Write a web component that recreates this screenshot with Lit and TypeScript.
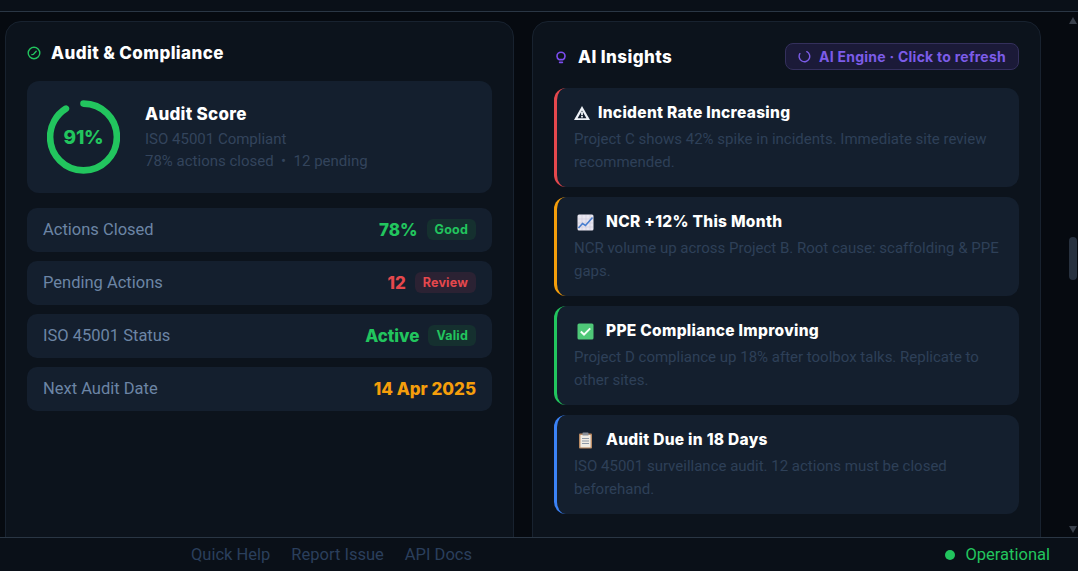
import { css, html, LitElement, svg } from "lit";
import { customElement } from "lit/decorators.js";

const rows = [
  { label: "Actions Closed", value: "78%", tone: "green", badge: "Good" },
  { label: "Pending Actions", value: "12", tone: "red", badge: "Review" },
  { label: "ISO 45001 Status", value: "Active", tone: "green", badge: "Valid" },
  { label: "Next Audit Date", value: "14 Apr 2025", tone: "amber", badge: "" },
];

const warnIcon = svg`<path d="M8 1 16 15H0Z" fill="#eef2f7"/><path d="M8 5.6 12.4 13.2H3.6Z" fill="#141f2e"/><path d="M7.1 6.8h1.8v3.4H7.1zM7.1 10.9h1.8v1.5H7.1z" fill="#eef2f7"/>`;
const chartIcon = svg`<rect x="0.5" y="0.5" width="16" height="16" rx="1.5" fill="#e8e6f0"/><path d="M1 5h15M1 9h15M1 13h15M5 1v15M9 1v15M13 1v15" stroke="#cfc9dc" stroke-width=".6"/><path d="M1.5 14 5.5 9.5 8.5 11.5 15.5 3.5" fill="none" stroke="#4a7fd0" stroke-width="1.6"/>`;
const checkIcon = svg`<rect x="0.5" y="0.5" width="16" height="16" rx="1.5" fill="#4fc878"/><path d="M3.8 8.6 7 11.6 13.2 5.4" fill="none" stroke="#f4fff7" stroke-width="2"/>`;
const clipIcon = svg`<rect x="2" y="1.5" width="13" height="15" rx="1" fill="#b98a63"/><rect x="3.4" y="3" width="10.2" height="12.4" fill="#f0ece4"/><rect x="5.5" y="0.5" width="6" height="3" rx=".6" fill="#8a8f98"/><path d="M5 6.5h7M5 9h7M5 11.5h7" stroke="#8f9aa8" stroke-width="1"/>`;

const insights = [
  { title: "Incident Rate Increasing", text: "Project C shows 42% spike in incidents. Immediate site review recommended.", tone: "red", icon: warnIcon },
  { title: "NCR +12% This Month", text: "NCR volume up across Project B. Root cause: scaffolding & PPE gaps.", tone: "amber", icon: chartIcon },
  { title: "PPE Compliance Improving", text: "Project D compliance up 18% after toolbox talks. Replicate to other sites.", tone: "green", icon: checkIcon },
  { title: "Audit Due in 18 Days", text: "ISO 45001 surveillance audit. 12 actions must be closed beforehand.", tone: "blue", icon: clipIcon },
];

@customElement("app-root")
export class AppRoot extends LitElement {
  static styles = css`
    :host {
      display: flex;
      flex-direction: column;
      height: 100vh;
      overflow: hidden;
      background: #060a10;
      font-family: Roboto, "Liberation Sans", sans-serif;
      color: #fff;
    }

    .topbar {
      flex: none;
      height: 11px;
      background: #0a1018;
      border-bottom: 1px solid #2a3644;
    }

    .middle {
      flex: 1;
      min-height: 0;
      display: flex;
      justify-content: space-between;
    }

    .panels {
      display: flex;
      gap: 18px;
      padding: 9px 0 0 5px;
      overflow: hidden;
    }

    .panel {
      box-sizing: border-box;
      flex: none;
      width: 509px;
      height: 560px;
      background: #0c131c;
      border: 1px solid #18222f;
      border-radius: 16px;
      padding: 21px;
    }

    .head {
      display: flex;
      align-items: center;
      font: 800 17px/20px Inter, sans-serif;
      letter-spacing: 0.4px;
    }

    .head svg {
      flex: none;
    }

    .score {
      display: flex;
      align-items: center;
      gap: 25px;
      height: 112px;
      margin-top: 18px;
      padding: 0 20px;
      background: #141f2e;
      border-radius: 12px;
    }

    .ring {
      position: relative;
      flex: none;
      width: 73px;
      height: 74px;
    }

    .ring span {
      position: absolute;
      inset: 0;
      display: flex;
      align-items: center;
      justify-content: center;
      font: 800 19px Inter, sans-serif;
      letter-spacing: -0.2px;
      color: #22c55e;
    }

    .score h3 {
      margin: 0 0 3px;
      font: 800 17px/22px Inter, sans-serif;
      letter-spacing: 0.3px;
    }

    .score p {
      margin: 0;
      font-size: 15px;
      line-height: 22px;
      color: #33445c;
    }

    .rows {
      display: flex;
      flex-direction: column;
      gap: 9.4px;
      margin-top: 15px;
    }

    .row {
      display: flex;
      align-items: center;
      justify-content: space-between;
      height: 43.6px;
      padding: 0 16px;
      background: #141f2e;
      border-radius: 10px;
      font-size: 16.5px;
      color: #6c85a5;
    }

    .row div {
      display: flex;
      align-items: center;
      gap: 9px;
    }

    .val {
      font: 800 17px Inter, sans-serif;
    }

    .green { color: #22c55e; }
    .red { color: #e5484d; }
    .amber { color: #f59e0b; }

    .badge {
      padding: 3px 8px;
      border-radius: 6px;
      font: 700 12.5px/15px Inter, sans-serif;
      letter-spacing: 0.2px;
    }

    .badge.green { background: #15302f; }
    .badge.red { background: #2b2233; }

    .ai-head {
      justify-content: space-between;
      height: 27px;
    }

    .ai-title {
      display: flex;
      align-items: center;
    }

    .refresh {
      display: flex;
      align-items: center;
      gap: 8px;
      box-sizing: border-box;
      width: 234px;
      height: 27px;
      justify-content: center;
      background: #1b1a38;
      border: 1px solid #34305c;
      border-radius: 8px;
      color: #7c5ce8;
      font: 700 14px Inter, sans-serif;
      letter-spacing: 0.25px;
    }

    .insights {
      display: flex;
      flex-direction: column;
      gap: 10px;
      margin-top: 18px;
    }

    .insight {
      box-sizing: border-box;
      height: 99px;
      padding: 14px 16px 0 17px;
      background: #141f2e;
      border-left: 3px solid;
      border-radius: 12px;
    }

    .insight.red { border-color: #e5484d; }
    .insight.amber { border-color: #f59e0b; }
    .insight.green { border-color: #22c55e; }
    .insight.blue { border-color: #3b82f6; }

    .insight h4 {
      display: flex;
      align-items: center;
      gap: 7px;
      margin: 0;
      font: 800 15.5px/22px Inter, sans-serif;
      letter-spacing: 0.3px;
      color: #fff;
    }

    .insight h4 svg {
      margin-right: 1px;
    }

    .insight h4 svg.wide {
      margin: 0 5px 0 3px;
    }

    .insight p {
      margin: 4px 0 0;
      font-size: 15px;
      line-height: 23px;
      color: #2e4058;
    }

    .scrollbar {
      flex: none;
      box-sizing: border-box;
      width: 11px;
      padding-top: 5px;
      display: flex;
      flex-direction: column;
      align-items: center;
    }

    .arrow {
      width: 0;
      height: 0;
      border-left: 4px solid transparent;
      border-right: 4px solid transparent;
    }

    .arrow.up {
      border-bottom: 7px solid #3a414c;
    }

    .arrow.down {
      border-top: 7px solid #3a414c;
    }

    .thumb {
      width: 8px;
      height: 43px;
      margin: 213px 0 246px;
      border-radius: 4px;
      background: #27313f;
    }

    .footer {
      flex: none;
      box-sizing: border-box;
      height: 34px;
      display: flex;
      align-items: center;
      padding: 0 28px 0 191px;
      background: #0a1018;
      border-top: 1px solid #2a3644;
      font-size: 16.5px;
    }

    .links {
      display: flex;
      gap: 21px;
      color: #2a3f5c;
    }

    .status {
      display: flex;
      align-items: center;
      gap: 10px;
      margin-left: auto;
      color: #22c55e;
    }

    .dot {
      width: 10px;
      height: 10px;
      border-radius: 50%;
      background: #22c55e;
    }
  `;

  render() {
    return html`
      <div class="topbar"></div>
      <div class="middle">
        <div class="panels">
          <section class="panel">
            <div class="head">
              <svg width="14" height="14" viewBox="0 0 14 14" style="margin-right:10px" fill="none" stroke="#22c55e" stroke-width="1.4" stroke-linecap="round" stroke-linejoin="round">
                <circle cx="7" cy="7" r="5.8" />
                <path d="M4.9 8.6 6.4 8.4 9.2 5.2" />
              </svg>
              Audit &amp; Compliance
            </div>
            <div class="score">
              <div class="ring">
                <svg width="73" height="74" viewBox="0 0 73 74">
                  <circle cx="36.5" cy="37" r="33.4" fill="none" stroke="#22c55e" stroke-width="6.6" stroke-linecap="round" stroke-dasharray="191 210" transform="rotate(-90 36.5 37)" />
                </svg>
                <span>91%</span>
              </div>
              <div>
                <h3>Audit Score</h3>
                <p>ISO 45001 Compliant</p>
                <p>78% actions closed &nbsp;•&nbsp; 12 pending</p>
              </div>
            </div>
            <div class="rows">
              ${rows.map(
                (r) => html`
                  <div class="row">
                    <span>${r.label}</span>
                    <div>
                      <span class="val ${r.tone}">${r.value}</span>
                      ${r.badge ? html`<span class="badge ${r.tone}">${r.badge}</span>` : ""}
                    </div>
                  </div>
                `
              )}
            </div>
          </section>
          <section class="panel">
            <div class="head ai-head">
              <div class="ai-title">
                <svg width="14" height="14" viewBox="0 0 14 14" style="margin-right:10px" fill="none" stroke="#7c4df0" stroke-width="1.6" stroke-linecap="round" stroke-linejoin="round">
                  <path d="M5 9.6C3.8 8.8 3 7.6 3 6.2a4 4 0 0 1 8 0c0 1.4-.8 2.6-2 3.4Z" />
                  <path d="M5.6 12.4h2.8" />
                </svg>
                AI Insights
              </div>
              <div class="refresh">
                <svg width="13" height="13" viewBox="0 0 14 14" fill="none" stroke="#7c5ce8" stroke-width="1.5" stroke-linecap="round">
                  <path d="M9.5 1.8A5.7 5.7 0 1 1 2 4" />
                </svg>
                AI Engine · Click to refresh
              </div>
            </div>
            <div class="insights">
              ${insights.map(
                (i, n) => html`
                  <div class="insight ${i.tone}">
                    <h4>
                      <svg class=${n ? "wide" : ""} width=${n ? 17 : 16} height=${n ? 17 : 16} viewBox="0 0 ${n ? 17 : 16} ${n ? 17 : 16}">${i.icon}</svg>
                      ${i.title}
                    </h4>
                    <p>${i.text}</p>
                  </div>
                `
              )}
            </div>
          </section>
        </div>
        <div class="scrollbar">
          <div class="arrow up"></div>
          <div class="thumb"></div>
          <div class="arrow down"></div>
        </div>
      </div>
      <div class="footer">
        <div class="links">
          <span>Quick Help</span>
          <span>Report Issue</span>
          <span>API Docs</span>
        </div>
        <div class="status"><span class="dot"></span>Operational</div>
      </div>
    `;
  }
}
